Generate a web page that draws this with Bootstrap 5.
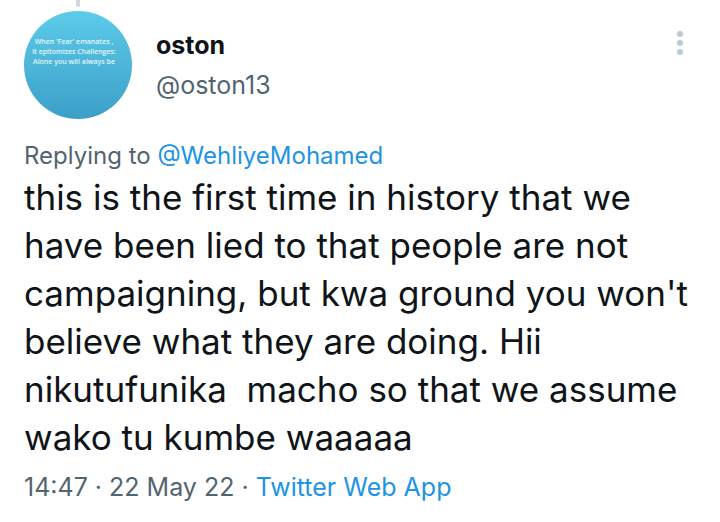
<!DOCTYPE html>
<html lang="en">
<head>
<meta charset="utf-8">
<meta name="viewport" content="width=device-width, initial-scale=1">
<title>oston on Twitter</title>
<link rel="stylesheet" href="https://cdn.jsdelivr.net/npm/bootstrap@5.3.0/dist/css/bootstrap.min.css">
<style>
body { font-family: Inter, sans-serif; color: #0f1419; background: #fff; }
.tweet { padding: 0 24px 14px; }
.thread-line { width: 4px; height: 7px; margin-left: 52px; margin-bottom: 4px; background: #cfd9de; border-radius: 0 0 2px 2px; }
.avatar { width: 108px; height: 108px; padding: 26px 8px 0 0; background: linear-gradient(#5ccbe8, #3c9fc8); color: #e4f6fb; font: 600 7px/10px "Open Sans", sans-serif; }
.names { padding: 14px 0 0 24px; }
.display-name { font-size: 25px; line-height: 40px; font-weight: 700; }
.soft { color: #536471; font-size: 25px; line-height: 40px; }
.reply-line { font-size: 24px; line-height: 34px; padding-top: 20px; }
.tweet a { color: #1d94e4; text-decoration: none; }
.tweet-text { font-size: 35px; line-height: 48px; white-space: pre-wrap; }
.stamp { padding-top: 6px; }
.more-btn { margin: 18px 12px 0 0; line-height: 0; }
</style>
</head>
<body>
<article class="tweet">
  <div class="thread-line"></div>
  <header class="d-flex align-items-start">
    <div class="avatar rounded-circle flex-shrink-0 text-center text-nowrap overflow-hidden">When 'Fear' emanates ,<br>it epitomizes Challenges:<br>Alone you will always be</div>
    <div class="names flex-grow-1">
      <div class="display-name">oston</div>
      <div class="soft">@oston13</div>
    </div>
    <button type="button" class="btn p-0 border-0 more-btn" aria-label="More"><svg width="8" height="28" viewBox="0 0 8 28" fill="#b9cad3"><circle cx="4" cy="5" r="3"/><circle cx="4" cy="14" r="3"/><circle cx="4" cy="23" r="3"/></svg></button>
  </header>
  <div class="soft reply-line">Replying to <a href="#">@WehliyeMohamed</a></div>
  <p class="tweet-text mb-0">this is the first time in history that we have been lied to that people are not campaigning, but kwa ground you won't believe what they are doing. Hii nikutufunika  macho so that we assume wako tu kumbe waaaaa</p>
  <footer class="soft stamp">14:47 · 22 May 22 · <a href="#">Twitter Web App</a></footer>
</article>
<script src="https://cdn.jsdelivr.net/npm/bootstrap@5.3.0/dist/js/bootstrap.bundle.min.js"></script>
</body>
</html>
